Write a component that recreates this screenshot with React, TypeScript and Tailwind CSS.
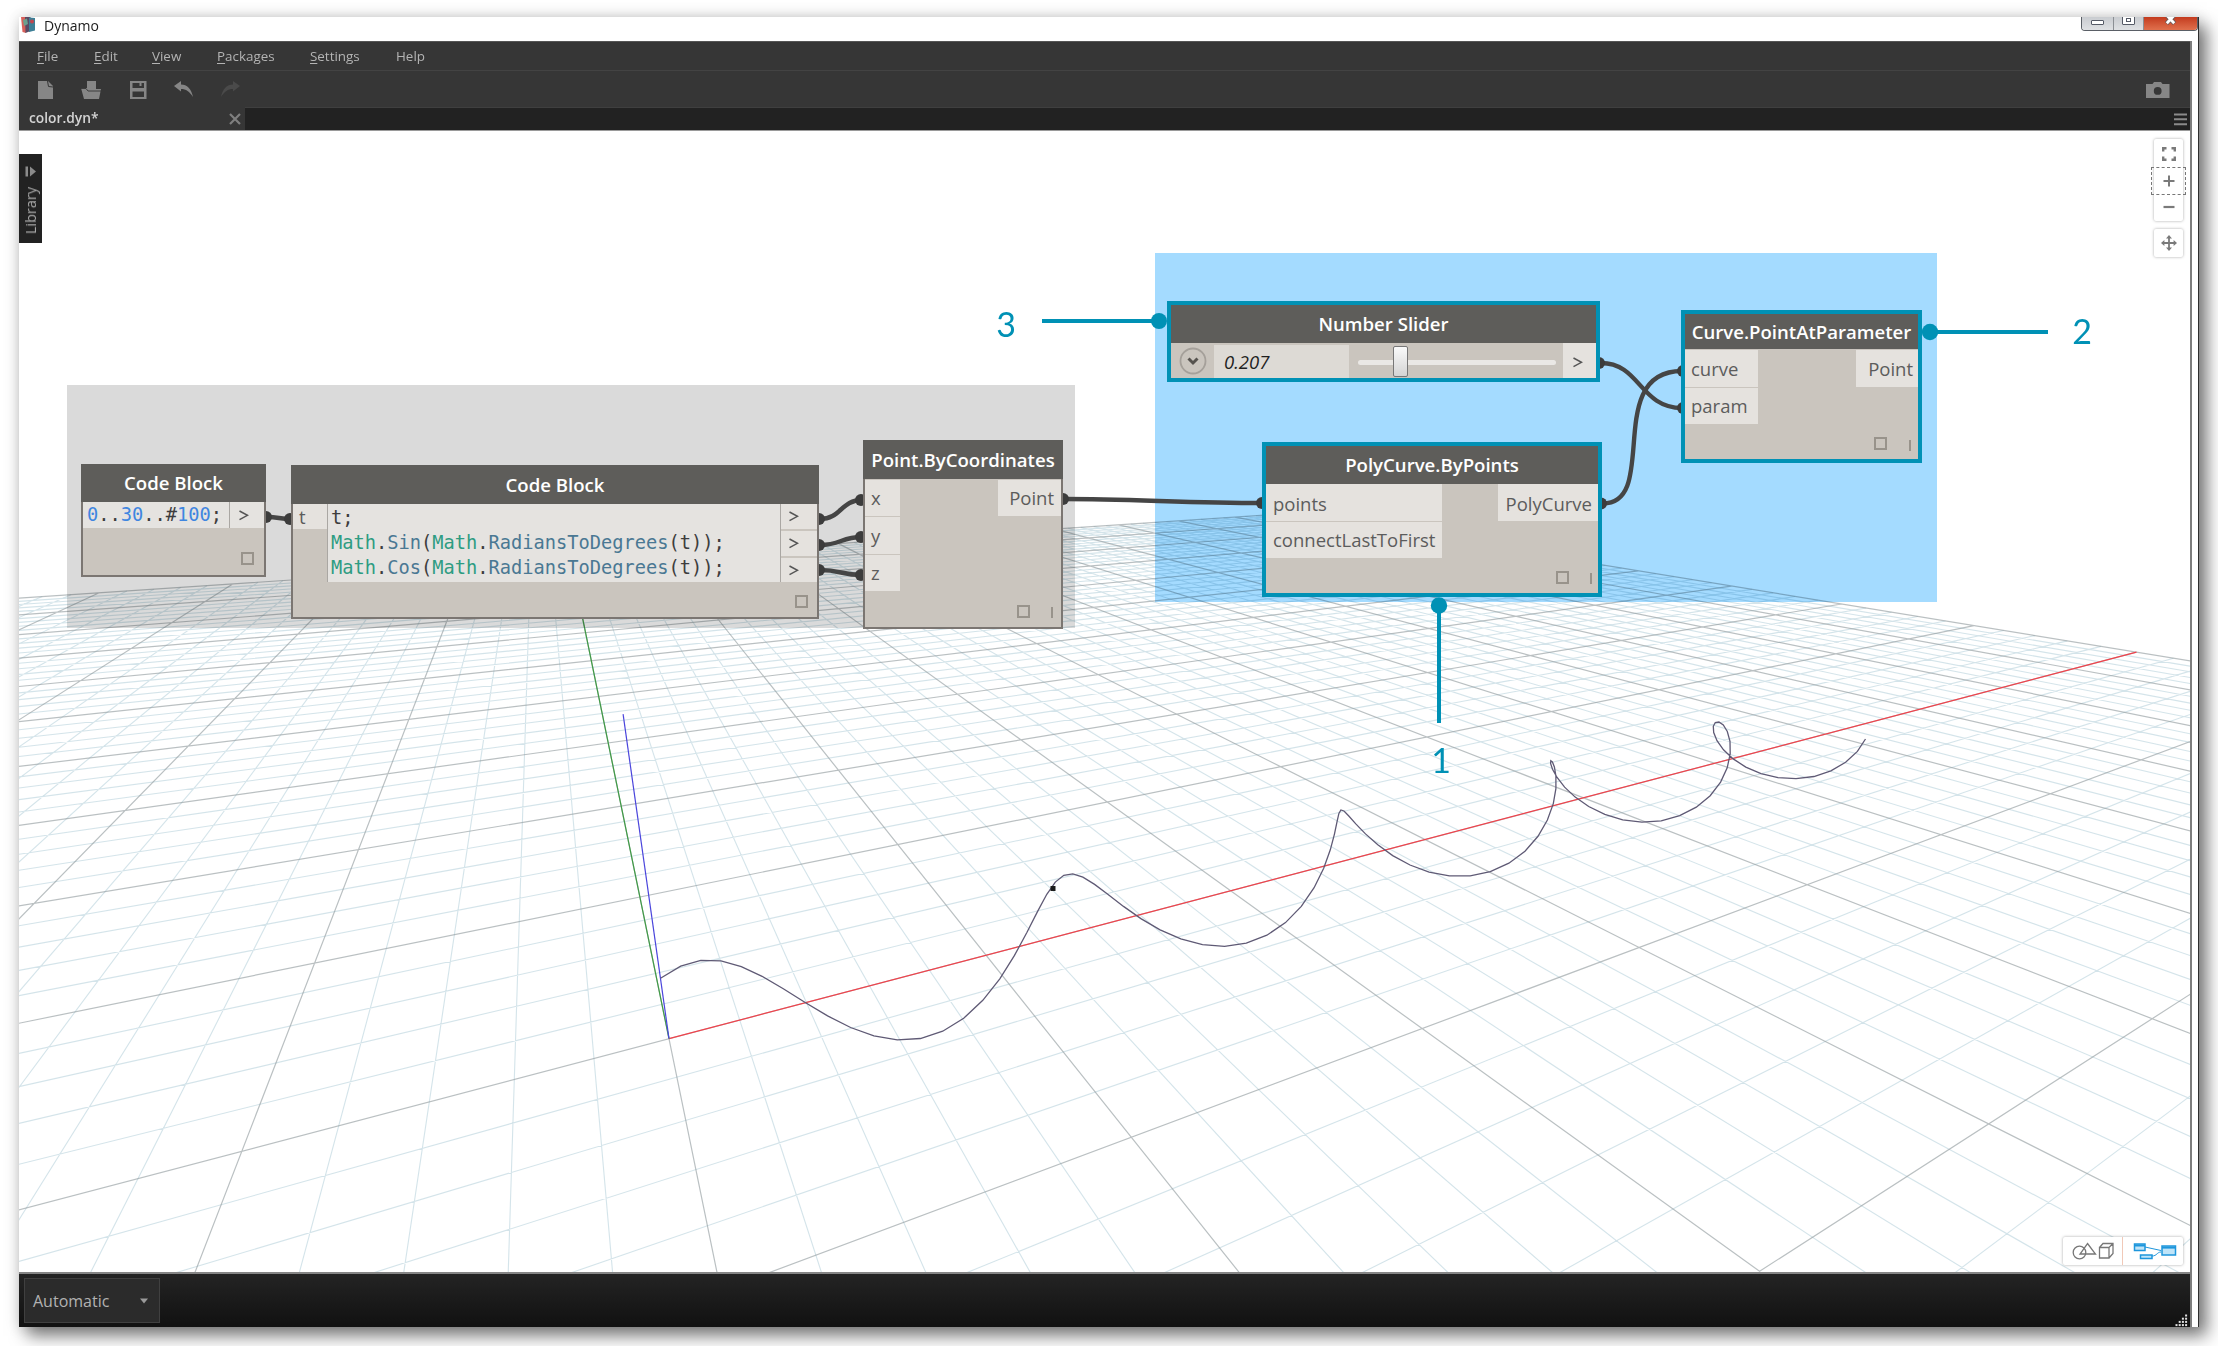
import React from "react";

/* ---------- 3D background preview ---------- */

type P2 = [number, number];

function project(x: number, y: number, z = 0): P2 {
  const w = 1 + 0.0296 * x + 0.05602 * y - 0.0172 * z;
  const px = 669 + 0.0296 * 3128 * x + 0.05602 * 535.9 * y - 19.9 * z;
  const py = 1038.7 + 0.0296 * 391 * x + 0.05602 * 391 * y - 77.2 * z;
  return [px / w, py / w];
}

const NEAR = 0.08;
const depth = (x: number, y: number) => 1 + 0.0296 * x + 0.05602 * y;

function gridLine(axis: "x" | "y", k: number): string {
  let lo = -50;
  if (axis === "x") lo = Math.max(lo, (NEAR - 1 - 0.0296 * k) / 0.05602);
  else lo = Math.max(lo, (NEAR - 1 - 0.05602 * k) / 0.0296);
  if (lo >= 50) return "";
  const a = axis === "x" ? project(k, lo) : project(lo, k);
  const b = axis === "x" ? project(k, 50) : project(50, k);
  return `M${a[0].toFixed(1)} ${a[1].toFixed(1)}L${b[0].toFixed(1)} ${b[1].toFixed(1)}`;
}

let minor = "";
let major = "";
for (let k = -50; k <= 50; k++) {
  if (k % 5 === 0) major += gridLine("x", k) + gridLine("y", k);
  else minor += gridLine("x", k) + gridLine("y", k);
}

const helix = Array.from({ length: 100 }, (_, i) => {
  const t = (30 * i) / 99;
  return project(t, Math.sin(t), Math.cos(t))
    .map((v) => v.toFixed(1))
    .join(",");
}).join(" ");

const origin = project(0, 0);
const xEnd = project(50, 0);
const yEnd = project(0, 50);
const zEnd = project(0, 0, 5);

function Preview() {
  return (
    <svg className="absolute inset-0" width="2172" height="1142" viewBox="19 130 2172 1142" fill="none">
      <path d={minor} stroke="#a9c9d6" strokeOpacity="0.5" strokeWidth="1.1" />
      <path d={major} stroke="#8f9a9c" strokeOpacity="0.62" strokeWidth="1.2" />
      <path d={`M${origin}L${xEnd}`} stroke="#f0424b" strokeWidth="1.2" />
      <path d={`M${origin}L${yEnd}`} stroke="#3f9a45" strokeWidth="1.2" />
      <path d={`M${origin}L${zEnd}`} stroke="#4a45dc" strokeWidth="1.2" />
      <polyline points={helix} stroke="#5f5a75" strokeWidth="1.3" />
      <rect x="1050.5" y="886" width="5" height="5" fill="#1c1c1c" />
    </svg>
  );
}

/* ---------- Wires and callouts ---------- */

const wires = [
  "M268 517C277 517 281 519 290 519",
  "M820 519C841 519 841 500 862 500",
  "M820 545C841 545 841 537 862 537",
  "M820 570C841 570 841 575 862 575",
  "M1064 499C1130 499 1190 503 1262 503",
  "M1601 363C1640 363 1640 408 1682 408",
  "M1603 503.500C1660 503.500 1603 371 1682 371",
];

const dots: P2[] = [
  [266, 517], [290, 519], [819, 519], [819, 545], [819, 570], [861, 500], [861, 537],
  [861, 575], [1063, 499], [1262, 503], [1599, 363], [1601, 503.5], [1683, 371], [1683, 408],
];

function Wires() {
  return (
    <svg className="absolute inset-0" width="2172" height="1142" viewBox="19 130 2172 1142" fill="none">
      {wires.map((d) => (
        <path key={d} d={d} stroke="#454545" strokeWidth="4.4" />
      ))}
      {dots.map(([x, y]) => (
        <circle key={`${x}-${y}`} cx={x} cy={y} r="6" fill="#3c3c3c" />
      ))}
    </svg>
  );
}

function Callouts() {
  return (
    <>
      <svg className="absolute inset-0" width="2172" height="1142" viewBox="19 130 2172 1142">
        <g stroke="#0091b5" strokeWidth="4">
          <path d="M1042 321H1159M1930 332H2048M1439 606V723" />
        </g>
        <g fill="#0091b5">
          <circle cx="1159" cy="321" r="8" />
          <circle cx="1930" cy="332" r="8.200" />
          <circle cx="1439" cy="605.500" r="8.200" />
        </g>
      </svg>
      <span className="absolute left-[977px] top-[176px] w-5 text-center font-[Lato] text-[34px] leading-9 text-[#0091b5]">3</span>
      <span className="absolute left-[2053px] top-[183px] w-5 text-center font-[Lato] text-[34px] leading-9 text-[#0091b5]">2</span>
      <span className="absolute left-[1412px] top-[612px] w-5 text-center font-[Lato] text-[34px] leading-9 text-[#0091b5]">1</span>
    </>
  );
}

/* ---------- Nodes ---------- */

const Title = ({ h, children }: { h: string; children: React.ReactNode }) => (
  <div className={`flex ${h} shrink-0 items-center justify-center whitespace-nowrap bg-[#5e5d5a] text-[18.600px] font-semibold text-white`}>
    {children}
  </div>
);

const Port = ({ className, children }: { className: string; children: React.ReactNode }) => (
  <div className={`flex items-center whitespace-nowrap bg-[#e5e2de] text-[18.500px] text-[#5c5c5c] ${className}`}>{children}</div>
);

const Arrow = () => (
  <svg width="10" height="11" viewBox="0 0 10 11" fill="none" stroke="#555" strokeWidth="1.500">
    <path d="M.5 1L8.500 5.300L.5 9.600" />
  </svg>
);

const Square = ({ className }: { className: string }) => (
  <div className={`absolute size-[13px] border-2 border-[#98938b] ${className}`} />
);
const Lacing = ({ className }: { className: string }) => (
  <div className={`absolute h-[11px] w-0.5 bg-[#98938b] ${className}`} />
);

const M = () => <span className="text-[#2e9c82]">Math</span>;
const F = ({ children }: { children: string }) => <span className="text-[#4a7893]">{children}</span>;
const N = ({ children }: { children: string }) => <span className="text-[#3f86e0]">{children}</span>;

function CodeSmall() {
  return (
    <div className="absolute left-[62px] top-[334px] flex h-[113px] w-[185px] flex-col border-2 border-t-0 border-[#7b7672] bg-[#cac5be]">
      <div className="-mx-0.5"><Title h="h-[38px]">Code Block</Title></div>
      <div className="flex h-[26px] bg-[#e5e3e0]">
        <div className="flex w-[147px] items-center whitespace-pre border-r border-[#aaa7a3] pl-1 font-['DejaVu_Sans_Mono'] text-[18.700px] text-[#3d3d3d]">
          <N>0</N>..<N>30</N>..#<N>100</N>;
        </div>
        <div className="flex items-center pl-[9px]"><Arrow /></div>
      </div>
      <Square className="right-[10px] bottom-[10px]" />
    </div>
  );
}

function CodeLarge() {
  return (
    <div className="absolute left-[272px] top-[335px] flex h-[154px] w-[528px] flex-col border-2 border-t-0 border-[#7b7672] bg-[#cac5be]">
      <div className="-mx-0.5"><Title h="h-[39px]">Code Block</Title></div>
      <div className="flex h-[78px]">
        <Port className="h-[25px] w-[34px] pl-1.5">t</Port>
        <div className="w-[454px] whitespace-pre border-x border-[#aaa7a3] bg-[#e5e3e0] pl-[3px] pt-px font-['DejaVu_Sans_Mono'] text-[18.700px] leading-[25px] text-[#3d3d3d]">
          <div>t;</div>
          <div><M />.<F>Sin</F>(<M />.<F>RadiansToDegrees</F>(t));</div>
          <div><M />.<F>Cos</F>(<M />.<F>RadiansToDegrees</F>(t));</div>
        </div>
        <div className="flex flex-1 flex-col gap-[2px]">
          <Port className="h-[25px] pl-2"><Arrow /></Port>
          <Port className="h-[25px] pl-2"><Arrow /></Port>
          <Port className="h-[24px] pl-2"><Arrow /></Port>
        </div>
      </div>
      <Square className="right-[9px] bottom-[9px]" />
    </div>
  );
}

function PointNode() {
  return (
    <div className="absolute left-[844px] top-[310px] flex h-[189px] w-[200px] flex-col border-2 border-t-0 border-[#7b7672] bg-[#cac5be]">
      <div className="-mx-0.5"><Title h="h-[39px]">Point.ByCoordinates</Title></div>
      <div className="flex items-start justify-between pt-px">
        <div className="flex w-[35px] flex-col gap-px">
          <Port className="h-9 pl-1.5">x</Port>
          <Port className="h-[37px] pl-1.5">y</Port>
          <Port className="h-[36px] pl-1.5">z</Port>
        </div>
        <Port className="h-9 w-[63px] justify-end pr-[7px]">Point</Port>
      </div>
      <Square className="right-[31px] bottom-[9px]" />
      <Lacing className="right-[8px] bottom-[9px]" />
    </div>
  );
}

function SliderNode() {
  return (
    <div className="absolute left-[1148px] top-[171px] flex h-[81px] w-[433px] flex-col border-4 border-[#0091b5] bg-[#cac5be]">
      <Title h="h-[38px]">Number Slider</Title>
      <div className="flex h-[35px] items-stretch">
        <div className="flex w-[43px] items-center justify-center">
          <svg width="28" height="28" viewBox="0 0 28 28" fill="none">
            <circle cx="14" cy="14" r="12.500" stroke="#a5a09a" strokeWidth="1.800" />
            <path d="M9.500 11.500L14 16L18.500 11.500" stroke="#56534f" strokeWidth="3" />
          </svg>
        </div>
        <div className="mt-0.5 flex w-[135px] items-center bg-[#dddad5] pl-2.5 text-[18.500px] italic text-[#1f1f1f]">0.207</div>
        <div className="relative flex flex-1 items-center pl-[9px] pt-[3px]">
          <div className="h-[5px] w-[198px] rounded-sm bg-[#eae8e5]" />
          <div className="absolute left-[44px] top-[3px] h-[31px] w-[15px] rounded-[2px] border border-[#777] bg-gradient-to-b from-[#fafafa] to-[#d4d4d4]" />
        </div>
        <Port className="w-[33px] pl-2.5 pt-1"><Arrow /></Port>
      </div>
    </div>
  );
}

function PolyCurveNode() {
  return (
    <div className="absolute left-[1243px] top-[312px] flex h-[155px] w-[340px] flex-col border-4 border-[#0091b5] bg-[#cac5be]">
      <Title h="h-[38px]">PolyCurve.ByPoints</Title>
      <div className="flex items-start justify-between">
        <div className="flex w-[176px] flex-col gap-px">
          <Port className="h-[37px] pl-[7px] pt-0.5">points</Port>
          <Port className="h-9 pl-[7px]">connectLastToFirst</Port>
        </div>
        <Port className="h-[37px] w-[100px] justify-end pr-1.5 pt-0.5">PolyCurve</Port>
      </div>
      <Square className="right-[29px] bottom-[9px]" />
      <Lacing className="right-[6px] bottom-[9px]" />
    </div>
  );
}

function ParameterNode() {
  return (
    <div className="absolute left-[1662px] top-[180px] flex h-[153px] w-[241px] flex-col border-4 border-[#0091b5] bg-[#cac5be]">
      <Title h="h-[35px]">Curve.PointAtParameter</Title>
      <div className="flex items-start justify-between pt-px">
        <div className="flex w-[73px] flex-col gap-px">
          <Port className="h-[37px] pl-1.5">curve</Port>
          <Port className="h-9 pl-1.5">param</Port>
        </div>
        <Port className="h-[37px] w-[62px] justify-end pr-[5px]">Point</Port>
      </div>
      <Square className="right-[31px] bottom-[9px]" />
      <Lacing className="right-[7px] bottom-[8px]" />
    </div>
  );
}

/* ---------- Canvas overlays ---------- */

function LibraryTab() {
  return (
    <div className="absolute left-0 top-6 flex h-[89px] w-[23px] flex-col items-center bg-[#222] pt-3">
      <svg width="12" height="11" viewBox="0 0 12 11" fill="#8b8b8b">
        <rect x="0.500" y="0.500" width="2.500" height="10" />
        <path d="M5 0.500L11 5.500L5 10.500Z" />
      </svg>
      <span className="mt-2.5 rotate-180 text-[14.500px] leading-[22px] text-[#a9a9a9] [writing-mode:vertical-rl]">Library</span>
    </div>
  );
}

function ZoomTools() {
  return (
    <div className="absolute left-[2135px] top-[9px] flex w-[29px] flex-col gap-2 text-[#7a7a7a]">
      <div className="relative flex h-[82px] flex-col items-center rounded-[2px] bg-white shadow-[0_0_3px_rgba(0,0,0,0.35)]">
        <svg className="mt-2" width="14" height="14" viewBox="0 0 14 14" fill="none" stroke="currentColor" strokeWidth="2.400">
          <path d="M1.200 4.500V1.200H4.500M9.500 1.200H12.800V4.500M12.800 9.500V12.800H9.500M4.500 12.800H1.200V9.500" />
        </svg>
        <div className="absolute -left-[3px] top-[28px] h-[28px] w-[35px] border border-dashed border-[#777]" />
        <svg className="mt-[14px]" width="12" height="12" viewBox="0 0 12 12" fill="none" stroke="currentColor" strokeWidth="2">
          <path d="M6 .5V11.500M.5 6H11.500" />
        </svg>
        <svg className="mt-[14px]" width="12" height="12" viewBox="0 0 12 12" fill="none" stroke="currentColor" strokeWidth="2.200">
          <path d="M.5 6H11.500" />
        </svg>
      </div>
      <div className="flex h-[28px] items-center justify-center rounded-[2px] bg-white shadow-[0_0_3px_rgba(0,0,0,0.35)]">
        <svg width="16" height="16" viewBox="0 0 16 16" fill="currentColor">
          <path d="M8 0L11 3.400H8.900V7.100H12.600V5L16 8L12.600 11V8.900H8.900V12.600H11L8 16L5 12.600H7.100V8.900H3.400V11L0 8L3.400 5V7.100H7.100V3.400H5Z" />
        </svg>
      </div>
    </div>
  );
}

function ViewToggle() {
  return (
    <div className="absolute left-[2044px] top-[1107px] flex h-[28px] w-[120px] rounded-[2px] bg-white shadow-[0_0_3px_rgba(0,0,0,0.35)]">
      <div className="flex w-[60px] items-center justify-center border-r border-[#f1c9b8]">
        <svg width="42" height="18" viewBox="0 0 42 18" fill="none" stroke="#777" strokeWidth="1.300">
          <circle cx="7.500" cy="10.500" r="6.300" />
          <path d="M15.500 1.500L23.500 12H8Z" />
          <path d="M27.500 5.500H37V16H27.500ZM27.500 5.500L31 1.500H41V11.500L37 16M37 5.500L41 1.500" />
        </svg>
      </div>
      <div className="flex flex-1 items-center justify-center pl-1">
        <svg width="44" height="18" viewBox="0 0 44 18" fill="#bfe4f8" stroke="#1e96dc" strokeWidth="1.500">
          <path d="M12 5L28 8.500M19 14C24 14 24 10 28 10" fill="none" strokeWidth="1" />
          <rect x="1.500" y="2" width="10.500" height="6.500" />
          <path d="M1.500 3.500H12" strokeWidth="2" />
          <rect x="7.500" y="13" width="11.500" height="3.500" />
          <rect x="29" y="4" width="13.500" height="9" />
          <path d="M29 5.600H42.500" strokeWidth="2" />
        </svg>
      </div>
    </div>
  );
}

/* ---------- Window chrome ---------- */

function TitleBar() {
  return (
    <div className="flex h-6 items-start justify-between bg-white">
      <div className="flex items-center gap-2 pl-[2px]">
        <svg width="15" height="17" viewBox="0 0 15 17">
          <path d="M0 0H5V16L1.500 15Z" fill="#d8605a" />
          <path d="M4 0H9.500V14L4.500 16Z" fill="#5b4a63" />
          <path d="M8 0.500L14 1V13.500L8 15Z" fill="#3d7f96" />
          <path d="M2 3L6 1.500L7 7L3 9Z" fill="#6aa08e" />
          <circle cx="11" cy="4.500" r="2" fill="#c2464d" />
        </svg>
        <span className="text-[14px] leading-[17px] text-[#1b1b1b]">Dynamo</span>
      </div>
      <div className="flex h-[14px] overflow-hidden rounded-b-[4px] border border-t-0 border-[#5a5f66] [width:117px]">
        <div className="flex w-8 justify-center border-r border-[#8b8f94] bg-gradient-to-b from-[#c9ccd0] to-[#dfe1e4]">
          <div className="mt-[3px] h-[5px] w-[13px] rounded-[1px] border border-[#555a66] bg-white" />
        </div>
        <div className="flex w-[30px] justify-center border-r border-[#8b8f94] bg-gradient-to-b from-[#c9ccd0] to-[#dfe1e4]">
          <div className="-mt-0.5 flex h-[10px] w-[13px] items-center justify-center rounded-[1px] border border-[#555a66] bg-white">
            <div className="h-1 w-[5px] border border-[#555a66]" />
          </div>
        </div>
        <div className="flex flex-1 justify-center bg-gradient-to-b from-[#c33a1d] to-[#e0704d]">
          <svg width="13" height="9" viewBox="0 0 13 9" fill="none">
            <path d="M2.500 -2L10.500 6.500M10.500 -2L2.500 6.500" stroke="#6a5a5a" strokeWidth="4.600" />
            <path d="M2.500 -2L10.200 6.200M10.500 -2L2.800 6.200" stroke="#fff" strokeWidth="2.800" />
          </svg>
        </div>
      </div>
    </div>
  );
}

const MenuItem = ({ first, rest, w }: { first?: string; rest: string; w: string }) => (
  <span className={`${w} shrink-0`}>
    {first && <span className="underline underline-offset-2">{first}</span>}
    {rest}
  </span>
);

function MenuBar() {
  return (
    <div className="flex h-[30px] items-center border-b border-[#434343] border-t border-t-[#555] pl-[18px] text-[13.400px] text-[#b4b4b4]">
      <MenuItem first="F" rest="ile" w="w-[57px]" />
      <MenuItem first="E" rest="dit" w="w-[58px]" />
      <MenuItem first="V" rest="iew" w="w-[65px]" />
      <MenuItem first="P" rest="ackages" w="w-[93px]" />
      <MenuItem first="S" rest="ettings" w="w-[86px]" />
      <MenuItem rest="Help" w="w-[60px]" />
    </div>
  );
}

function Toolbar() {
  return (
    <div className="flex h-[36px] items-center justify-between pl-[18px] pr-[20px] pt-0.5">
      <div className="flex items-center text-[#868686]">
        <svg width="17" height="20" viewBox="0 0 17 20" fill="currentColor">
          <path d="M1 1H11L16 6V19H1Z" />
          <path d="M10.500 1L11.500 6.500L16 7" fill="none" stroke="#363636" strokeWidth="1" />
        </svg>
        <svg className="ml-[26px]" width="22" height="20" viewBox="0 0 22 20" fill="currentColor">
          <path d="M7 1H16V9H21L19 19H4L1 8H7Z" />
          <path d="M0.500 8.500H6L8 11H21" fill="none" stroke="#363636" strokeWidth="0.900" />
        </svg>
        <svg className="ml-[27px]" width="18" height="20" viewBox="0 0 18 20" fill="currentColor">
          <path fillRule="evenodd" d="M1 1H17.500V19H1ZM3.500 3V8H15V3ZM3.500 11.500V17H15V11.500Z" />
          <rect x="10.500" y="3" width="2" height="3" />
        </svg>
        <svg className="ml-[26px]" width="22" height="20" viewBox="0 0 22 20" fill="currentColor">
          <path d="M1 6L8 1V4.500C14 4.500 18.500 9 20 17C16.500 11.500 13 9 8 9V11.500Z" />
        </svg>
        <svg className="ml-[25px] text-[#4a4a4a]" width="22" height="20" viewBox="0 0 22 20" fill="currentColor">
          <path d="M20 6L13 1V4.500C7 4.500 2.500 9 1 17C4.500 11.500 8 9 13 9V11.500Z" />
        </svg>
      </div>
      <svg width="25" height="18" viewBox="0 0 25 18" fill="#868686">
        <path fillRule="evenodd" d="M1 3H7.500L9 1H16L17.500 3H24.500V17H1ZM12.700 6A3.900 3.900 0 1 0 12.700 13.800A3.900 3.900 0 1 0 12.700 6Z" />
      </svg>
    </div>
  );
}

function TabStrip() {
  return (
    <div className="flex h-[23px] items-stretch bg-[#222]">
      <div className="flex w-[226px] items-center justify-between bg-[#363636] pl-2.5 pr-1">
        <span className="text-[13.800px] font-semibold text-[#d4d4d4]">color.dyn*</span>
        <svg width="12" height="12" viewBox="0 0 12 12" stroke="#7f7f7f" strokeWidth="2.200">
          <path d="M1 1L11 11M11 1L1 11" />
        </svg>
      </div>
      <div className="flex flex-1 items-center justify-end border-t border-[#3f3f3f] pr-[3px]">
        <svg width="13" height="13" viewBox="0 0 13 13" stroke="#8a8a8a" strokeWidth="2">
          <path d="M0 1.500H13M0 6.300H13M0 11.200H13" />
        </svg>
      </div>
    </div>
  );
}

const gripDots: P2[] = [];
for (let r = 0; r < 4; r++) for (let c = 3 - r; c < 4; c++) gripDots.push([c * 3.2, r * 3.2]);

function StatusBar() {
  return (
    <div className="relative flex h-[55px] items-center border-t-2 border-[#858585] bg-gradient-to-b from-[#242424] to-[#111] pl-[5px]">
      <div className="flex h-[45px] w-[136px] items-center justify-between border border-[#404040] bg-[#2b2b2b] pl-2 pr-[11px] text-[16px] text-[#b2b2b2]">
        <span>Automatic</span>
        <svg width="8" height="6" viewBox="0 0 8 6" fill="#9a9a9a">
          <path d="M0 .5H8L4 5.500Z" />
        </svg>
      </div>
      <svg className="absolute right-0.5 bottom-0" width="13" height="13" viewBox="0 0 13 13" fill="#e2e2e2">
        {gripDots.map(([x, y]) => (
          <rect key={`${x}-${y}`} x={x + 0.5} y={y + 0.5} width="2" height="2" />
        ))}
      </svg>
    </div>
  );
}

export default function App() {
  return (
    <div className="h-[1346px] w-[2218px] overflow-hidden bg-white pl-[19px] pt-[17px] font-['Open_Sans',sans-serif]">
      <div className="flex h-[1310px] w-[2180px] flex-col border-r border-[#2e2e2e] bg-white shadow-[8px_9px_16px_rgba(0,0,0,0.5),0_0_14px_rgba(0,0,0,0.16)]">
        <TitleBar />
        <div className="flex w-[2173px] flex-1 flex-col border-r-2 border-[#7d7d7d]">
          <div className="bg-[#363636]">
            <MenuBar />
            <Toolbar />
            <TabStrip />
          </div>
          <div className="relative h-[1142px] overflow-hidden bg-white shadow-[inset_0_1px_0_#9a9a9a]">
            <Preview />
            <div className="absolute left-[48px] top-[255px] h-[243px] w-[1008px] bg-[#dadada] mix-blend-multiply" />
            <div className="absolute left-[1136px] top-[123px] h-[349px] w-[782px] bg-[#a4dbff] mix-blend-multiply" />
            <Wires />
            <CodeSmall />
            <CodeLarge />
            <PointNode />
            <SliderNode />
            <PolyCurveNode />
            <ParameterNode />
            <Callouts />
            <LibraryTab />
            <ZoomTools />
            <ViewToggle />
          </div>
          <StatusBar />
        </div>
      </div>
    </div>
  );
}
